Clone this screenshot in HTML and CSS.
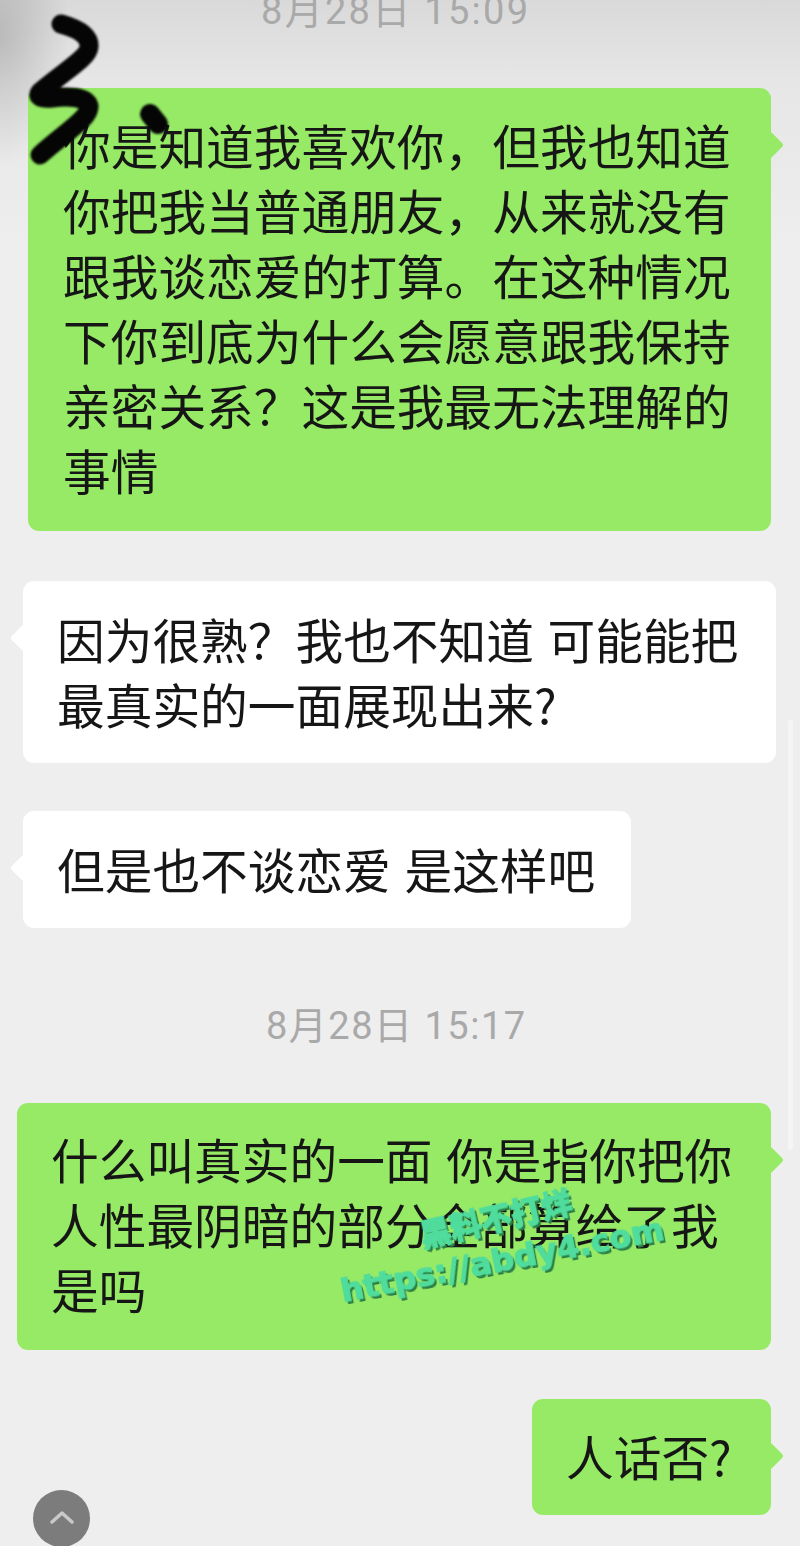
FILE: index.html
```html
<!DOCTYPE html>
<html lang="zh-CN">
<head>
  <meta charset="UTF-8">
  <meta name="viewport" content="width=device-width, initial-scale=1.0">
  <title>聊天记录</title>
  <link rel="stylesheet" href="styles.css">
</head>
<body>
  <div class="chat">
    <div class="time timeTop">8月28日 15:09</div>

    <div class="bubble green b1">
      你是知道我喜欢你，但我也知道<br>
      你把我当普通朋友，从来就没有<br>
      跟我谈恋爱的打算。在这种情况<br>
      下你到底为什么会愿意跟我保持<br>
      亲密关系？这是我最无法理解的<br>
      事情
    </div>

    <div class="bubble white b2">
      因为很熟？我也不知道 可能能把<br>
      最真实的一面展现出来?
    </div>

    <div class="bubble white b3">但是也不谈恋爱 是这样吧</div>

    <div class="time timeMid">8月28日 15:17</div>

    <div class="bubble green b4">
      什么叫真实的一面 你是指你把你<br>
      人性最阴暗的部分全部算给了我<br>
      是吗
    </div>

    <div class="bubble green b5">人话否?</div>
  </div>

  <div class="scrollBar"></div>

  <!-- marker scribble on top of the shot -->
  <svg class="scribble" width="180" height="180" viewBox="0 0 180 180">
    <path d="M61 24 C72 27 90 33 89 47 C88 58 66 70 40 92 C36 97 42 99 52 98 C66 96 86 96 89 106 C90 118 68 130 40 155" fill="none" stroke="#050505" stroke-width="19" stroke-linecap="round" stroke-linejoin="round"/>
    <path d="M150 114 L158 124" fill="none" stroke="#050505" stroke-width="20" stroke-linecap="round"/>
  </svg>

  <div class="mark markCn">黑料不打烊</div>
  <div class="mark markUrl">https://abdy4.com</div>

  <div class="upBtn">
    <svg width="24" height="14" viewBox="0 0 24 14">
      <path d="M2 12 L12 3 L22 12" fill="none" stroke="#c9c9c9" stroke-width="3.5" stroke-linecap="round" stroke-linejoin="round"/>
    </svg>
  </div>
</body>
</html>
```

FILE: styles.css
```css
html, body {
  margin: 0;
  padding: 0;
}
body {
  position: relative;
  width: 800px;
  height: 1546px;
  overflow: hidden;
  background-color: #eeeeee;
  background-image:
    radial-gradient(ellipse 70px 130px at 0 35px, rgba(150, 150, 150, 0.5), rgba(150, 150, 150, 0)),
    linear-gradient(#d9d9d9, #e6e6e6 80px, #eeeeee 250px);
  font-family: "Noto Sans CJK SC", "Liberation Sans", sans-serif;
}
.chat {
  display: flex;
  flex-direction: column;
  align-items: flex-start;
}
.time {
  align-self: flex-start;
  color: #a9a9a9;
  font-family: "Roboto", "Noto Sans CJK SC", sans-serif;
  font-size: 38px;
  line-height: 44px;
  white-space: nowrap;
  letter-spacing: 1.5px;
}
.timeTop {
  margin: -11px 0 55px 261px;
  letter-spacing: 2.3px;
}
.timeMid {
  margin: 76px 0 55px 266px;
}
.bubble {
  position: relative;
  box-sizing: border-box;
  border-radius: 11px;
  color: #161616;
  font-size: 47.7px;
  line-height: 65px;
  white-space: nowrap;
  word-spacing: 3px;
  filter: blur(0.4px);
}
.bubble::after {
  content: "";
  position: absolute;
  top: 47px;
  width: 20px;
  height: 20px;
  border-radius: 3px;
  transform: rotate(45deg);
}
.green {
  background: #96ea65;
}
.green::after {
  right: -9px;
  background: #96ea65;
}
.white {
  background: #ffffff;
}
.white::after {
  left: -9px;
  background: #ffffff;
}
.b1 {
  width: 743px;
  height: 443px;
  margin-left: 28px;
  padding: 24px 0 0 35px;
}
.b2 {
  width: 753px;
  height: 182px;
  margin: 50px 0 0 23px;
  padding: 25px 0 0 34px;
}
.b3 {
  width: 608px;
  height: 117px;
  margin: 48px 0 0 23px;
  padding: 25px 0 0 34px;
}
.b4 {
  width: 754px;
  height: 247px;
  margin-left: 17px;
  padding: 23px 0 0 34px;
}
.b5 {
  width: 239px;
  height: 116px;
  margin: 49px 0 0 532px;
  padding: 24px 0 0 34px;
}
.scrollBar {
  position: absolute;
  left: 788px;
  top: 720px;
  width: 5px;
  height: 430px;
  background: #f5f5f5;
  border-radius: 3px;
}
.scribble {
  position: absolute;
  left: 0;
  top: 0;
  filter: blur(0.8px);
}
.mark {
  position: absolute;
  color: #4fdc9c;
  font-weight: 900;
  white-space: nowrap;
  -webkit-text-stroke: 1.2px #4fdc9c;
  text-shadow: 2px 3px 0 #2c7f45;
  filter: blur(0.4px);
}
.markCn {
  left: 418px;
  top: 1197px;
  font-size: 31px;
  line-height: 40px;
  transform: rotate(-13deg);
}
.markUrl {
  left: 338px;
  top: 1240px;
  font-family: "DejaVu Sans", sans-serif;
  font-size: 32px;
  line-height: 40px;
  transform: rotate(-11deg);
}
.upBtn {
  position: absolute;
  left: 33px;
  top: 1490px;
  width: 57px;
  height: 57px;
  border-radius: 50%;
  background: #7c7c7c;
  display: flex;
  align-items: center;
  justify-content: center;
}
.upBtn svg {
  margin-bottom: 4px;
}
```
